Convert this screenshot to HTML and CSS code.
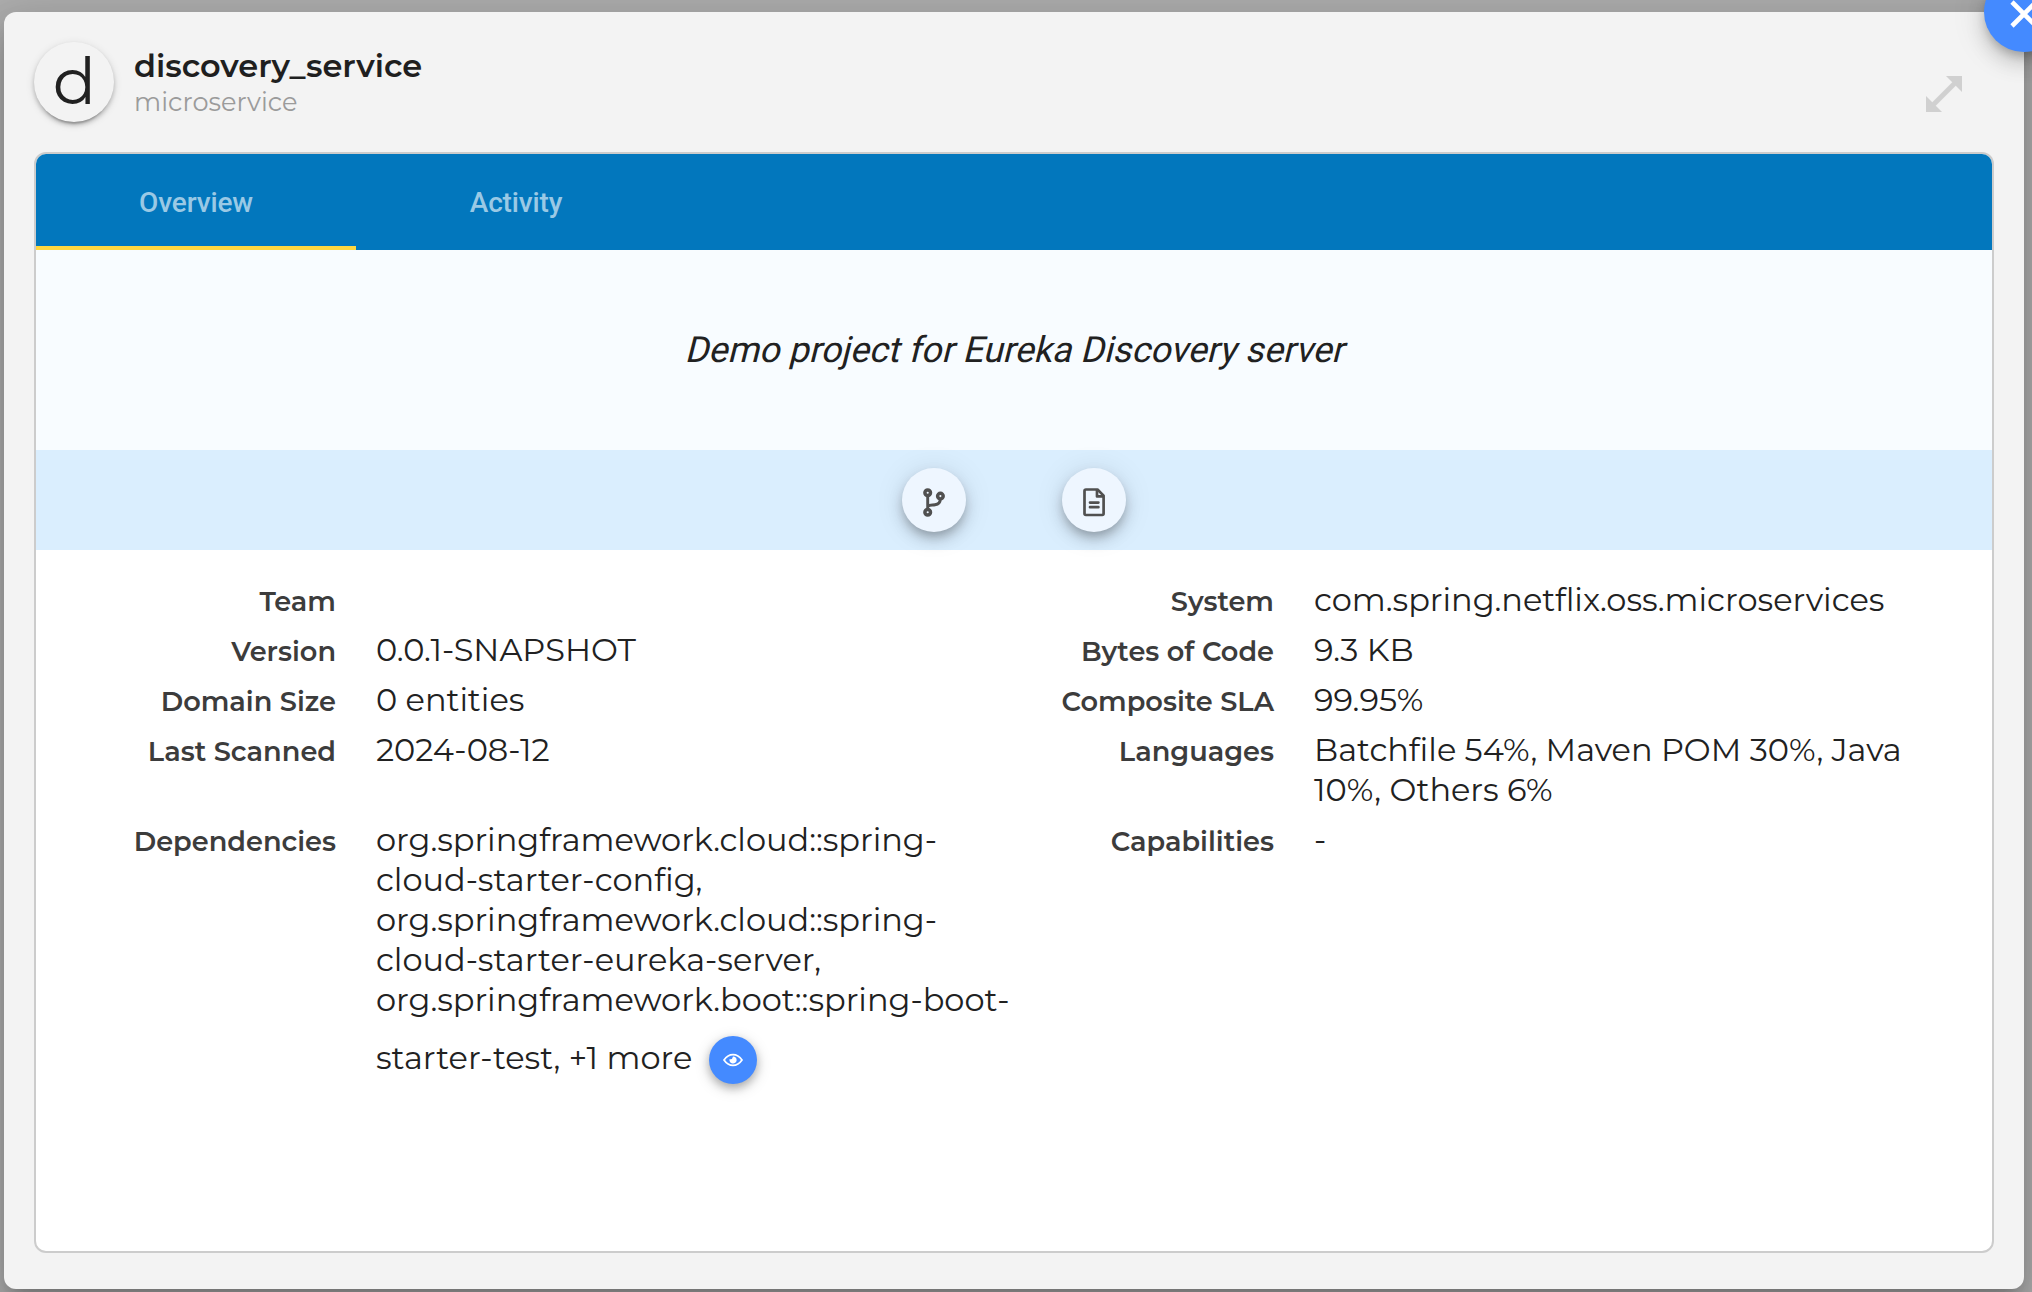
FILE: index.html
```html
<!DOCTYPE html>
<html lang="en">
<head>
<meta charset="utf-8">
<title>discovery_service</title>
<link rel="stylesheet" href="styles.css">
</head>
<body>
<main class="dialog">
  <header class="header">
    <div class="avatar">d</div>
    <div class="titles">
      <h1 class="title">discovery_service</h1>
      <p class="subtitle">microservice</p>
    </div>
    <svg class="expand" viewBox="0 0 36 36"><path d="M20 0H36V16ZM0 20V36H16Z"/><path d="M6 30L30 6" stroke="#d0d0d0" stroke-width="5"/></svg>
  </header>

  <section class="card">
    <nav class="tabs">
      <a class="tab tab-active">Overview</a>
      <a class="tab">Activity</a>
    </nav>
    <div class="description"><p class="description-text">Demo project for Eureka Discovery server</p></div>
    <div class="actions">
      <button class="action" aria-label="Repository">
        <svg viewBox="0 0 64 64"><g fill="none" stroke="#505050" stroke-width="2.9"><path d="M25.7 28V41M25.7 38.6C27.5 36.6 30 37.3 33 36.8C37 36.2 38.3 34 38.3 31"/><g stroke-width="3.5"><circle cx="25.7" cy="24.7" r="2.8"/><circle cx="38.4" cy="28.1" r="2.8"/><circle cx="25.7" cy="44.3" r="2.8"/></g></g></svg>
      </button>
      <button class="action" aria-label="Documentation">
        <svg viewBox="0 0 64 64"><g fill="none" stroke="#505050" stroke-width="2.7" stroke-linejoin="round"><path d="M24 21.5H35.5L41.6 27.6V45.6Q41.6 47 40.2 47H24Q22.5 47 22.5 45.6V23Q22.5 21.5 24 21.5Z"/><path d="M35 21.5V28.4H41.6"/><path d="M28 34.6H36.4M28 39.2H36.4" stroke-linecap="round"/></g></svg>
      </button>
    </div>
    <div class="details">
      <div class="row">
        <div class="label">Team</div><div class="value"></div>
        <div class="label">System</div><div class="value">com.spring.netflix.oss.microservices</div>
      </div>
      <div class="row">
        <div class="label">Version</div><div class="value">0.0.1-SNAPSHOT</div>
        <div class="label">Bytes of Code</div><div class="value">9.3 KB</div>
      </div>
      <div class="row">
        <div class="label">Domain Size</div><div class="value">0 entities</div>
        <div class="label">Composite SLA</div><div class="value">99.95%</div>
      </div>
      <div class="row">
        <div class="label">Last Scanned</div><div class="value">2024-08-12</div>
        <div class="label">Languages</div><div class="value">Batchfile 54%, Maven POM 30%, Java<br>10%, Others 6%</div>
      </div>
      <div class="row">
        <div class="label">Dependencies</div>
        <div class="value">
          org.springframework.cloud::spring-<br>
          cloud-starter-config,<br>
          org.springframework.cloud::spring-<br>
          cloud-starter-eureka-server,<br>
          org.springframework.boot::spring-boot-
          <div class="more">
            <span class="more-text">starter-test, +1 more</span>
            <button class="view" aria-label="View all">
              <svg viewBox="0 0 48 48"><path d="M15 24C18 19.6 21 18.6 24 18.6S30 19.6 33 24C30 28.4 27 29.4 24 29.4S18 28.4 15 24Z" fill="none" stroke="#fff" stroke-width="1.7"/><path d="M24 20.4A3.6 3.6 0 1 1 20.6 23Q23.2 24 24 20.4Z" fill="#fff"/></svg>
            </button>
          </div>
        </div>
        <div class="label">Capabilities</div><div class="value">-</div>
      </div>
    </div>
  </section>
  <button class="close" aria-label="Close">
    <svg viewBox="0 0 80 80"><path d="M28 30L52 54M52 30L28 54" stroke="#fff" stroke-width="4.6"/></svg>
  </button>
</main>
</body>
</html>
```
FILE: styles.css
```css
* { box-sizing: border-box; }

body {
  margin: 0;
  height: 1292px;
  padding: 12px 8px 3px 4px;
  overflow: hidden;
  background: #adadad;
  color: #212121;
  font-family: Montserrat, Inter, sans-serif;
}

button { border: 0; padding: 0; }
svg { display: block; }
h1, p { margin: 0; }

.dialog {
  position: relative;
  height: 1277px;
  padding: 0 30px 36px;
  display: flex;
  flex-direction: column;
  border-radius: 12px;
  background: #f3f3f3;
  box-shadow: 0 11px 15px -7px rgba(0,0,0,.2), 0 24px 38px 3px rgba(0,0,0,.14), 0 9px 46px 8px rgba(0,0,0,.12);
}

.header {
  height: 140px;
  padding: 30px 32px 0 0;
  display: flex;
  align-items: flex-start;
}
.avatar {
  width: 80px;
  height: 80px;
  padding-left: 1px;
  border-radius: 50%;
  font-size: 64px;
  line-height: 78px;
  text-align: center;
  box-shadow: 0 6px 2px -4px rgba(0,0,0,.2), 0 3px 4px rgba(0,0,0,.2), 0 2px 10px rgba(0,0,0,.12);
}
.titles { margin-left: 20px; }
.title {
  padding-top: 4px;
  font-size: 32px;
  font-weight: 600;
  line-height: 40px;
  color: #1f1f1f;
}
.subtitle {
  font-size: 25.6px;
  line-height: 32px;
  color: #9b9b9b;
}
.expand {
  width: 36px;
  height: 36px;
  margin: 34px 0 0 auto;
  fill: #d0d0d0;
}

.card {
  flex: 1;
  border: 2px solid #ccc;
  border-radius: 12px;
  background: #fff;
  overflow: hidden;
}
.tabs {
  display: flex;
  height: 96px;
  background: #0277bd;
}
.tab {
  width: 320px;
  height: 96px;
  padding-top: 3px;
  border-bottom: 4px solid transparent;
  font: 500 28px/92px Roboto, sans-serif;
  letter-spacing: -.15px;
  text-align: center;
  color: #9ac9e5;
}
.tab-active { border-bottom-color: #ffd740; }
.description {
  height: 200px;
  text-align: center;
  background: #f8fcff;
}
.description-text {
  font: 400 36px/200px Roboto, sans-serif;
  transform: skewX(-14deg);
  transform-origin: 50% 112px;
}
.actions {
  height: 100px;
  display: flex;
  justify-content: center;
  align-items: center;
  gap: 96px;
  background: #daeefe;
}
.action {
  width: 64px;
  height: 64px;
  border-radius: 50%;
  background: #eef6ff;
  box-shadow: 0 6px 10px -2px rgba(0,0,0,.2), 0 8px 16px rgba(0,0,0,.14), 0 2px 30px rgba(0,0,0,.1);
}

.details { padding: 30px 0 0 64px; }
.row {
  display: grid;
  grid-template-columns: 236px 662px 276px 640px;
  padding-bottom: 10px;
}
.label {
  padding-top: 2px;
  margin-bottom: -2px;
  font-size: 27.2px;
  font-weight: 600;
  line-height: 40px;
  text-align: right;
  color: #3c3c3c;
}
.value {
  padding-left: 40px;
  font-size: 32px;
  line-height: 40px;
  white-space: nowrap;
}

.more {
  display: flex;
  align-items: center;
  height: 48px;
  margin-top: 16px;
}
.more-text { width: 333px; padding-bottom: 4px; }
.view {
  width: 48px;
  height: 48px;
  border-radius: 50%;
  background: #448aff;
  box-shadow: 0 4px 8px rgba(0,0,0,.24), 0 4px 16px rgba(0,0,0,.16);
}

.close {
  position: absolute;
  top: -40px;
  right: -40px;
  width: 80px;
  height: 80px;
  border-radius: 50%;
  background: #448aff;
  box-shadow: 0 6px 10px -2px rgba(0,0,0,.2), 0 12px 20px rgba(0,0,0,.14), 0 2px 36px rgba(0,0,0,.12);
}
```
